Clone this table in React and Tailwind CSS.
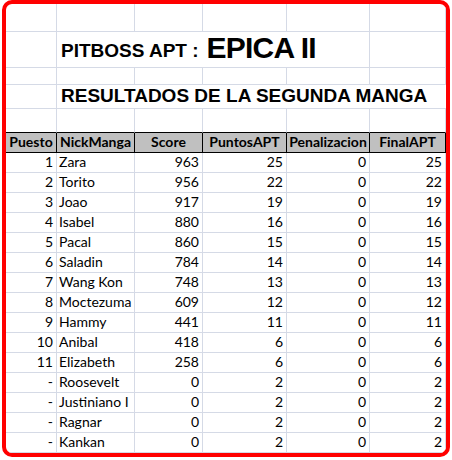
import React from "react";

const rows = [
  ["1", "Zara", 963, 25, 0, 25],
  ["2", "Torito", 956, 22, 0, 22],
  ["3", "Joao", 917, 19, 0, 19],
  ["4", "Isabel", 880, 16, 0, 16],
  ["5", "Pacal", 860, 15, 0, 15],
  ["6", "Saladin", 784, 14, 0, 14],
  ["7", "Wang Kon", 748, 13, 0, 13],
  ["8", "Moctezuma", 609, 12, 0, 12],
  ["9", "Hammy", 441, 11, 0, 11],
  ["10", "Anibal", 418, 6, 0, 6],
  ["11", "Elizabeth", 258, 6, 0, 6],
  ["-", "Roosevelt", 0, 2, 0, 2],
  ["-", "Justiniano I", 0, 2, 0, 2],
  ["-", "Ragnar", 0, 2, 0, 2],
  ["-", "Kankan", 0, 2, 0, 2],
];

const headers = ["Puesto", "NickManga", "Score", "PuntosAPT", "Penalizacion", "FinalAPT"];

const cell = "border-r border-b border-[#d5dae6]";

const EmptyRow = ({ h, last }) => (
  <>
    {[0, 1, 2, 3, 4, 5].map((i) => (
      <div key={i} className={`${h} border-r ${last ? "border-b border-b-black border-r-[#d5dae6]" : "border-b border-[#d5dae6]"}`} />
    ))}
  </>
);

export default function App() {
  return (
    <div className="w-[452px] h-[460px] bg-white pl-[2px]">
      <div className="w-[448px] h-[457px] border-4 border-[#ff0000] rounded-[10px] overflow-hidden bg-white">
        <div className="grid grid-cols-[51px_78px_68px_84px_83px_76px] text-black">
          <EmptyRow h="h-[28px]" />

          {/* title */}
          <div className={`h-[36px] ${cell}`} />
          <div className="col-span-4 h-[36px] border-r border-b border-[#d5dae6] flex items-end gap-[8px] pl-[4px] pb-[3px] font-['Liberation_Sans',Arial,sans-serif] font-bold whitespace-nowrap">
            <span className="text-[19px] leading-[24px] pb-[1px]">PITBOSS APT :</span>
            <span className="text-[30px] leading-[32px] tracking-[-0.8px]">EPICA II</span>
          </div>
          <div className={`h-[36px] ${cell}`} />

          <EmptyRow h="h-[17px]" />

          <div className={`h-[24px] ${cell}`} />
          <div className="col-span-5 h-[24px] border-b border-[#d5dae6] flex items-end pl-[4px] pb-[1px] font-['Liberation_Sans',Arial,sans-serif] font-bold text-[19px] leading-[22px] whitespace-nowrap">
            RESULTADOS DE LA SEGUNDA MANGA
          </div>

          <EmptyRow h="h-[24px]" last />

          {/* header */}
          {headers.map((h) => (
            <div
              key={h}
              className="h-[20px] bg-[#c0c0c0] border-r border-b border-black flex items-end justify-center pb-[1px] font-['Lato',sans-serif] font-bold text-[14px] leading-[18px]"
            >
              {h}
            </div>
          ))}

          {rows.map((r, i) => (
            <React.Fragment key={i}>
              {r.map((v, j) => (
                <div
                  key={j}
                  className={`h-[20px] ${cell} flex items-end pb-[1px] font-['Lato',sans-serif] text-[14px] leading-[18px] whitespace-nowrap ${
                    j === 1 ? "justify-start pl-[2px]" : "justify-end pr-[3px]"
                  }`}
                >
                  {v}
                </div>
              ))}
            </React.Fragment>
          ))}
        </div>
      </div>
    </div>
  );
}
